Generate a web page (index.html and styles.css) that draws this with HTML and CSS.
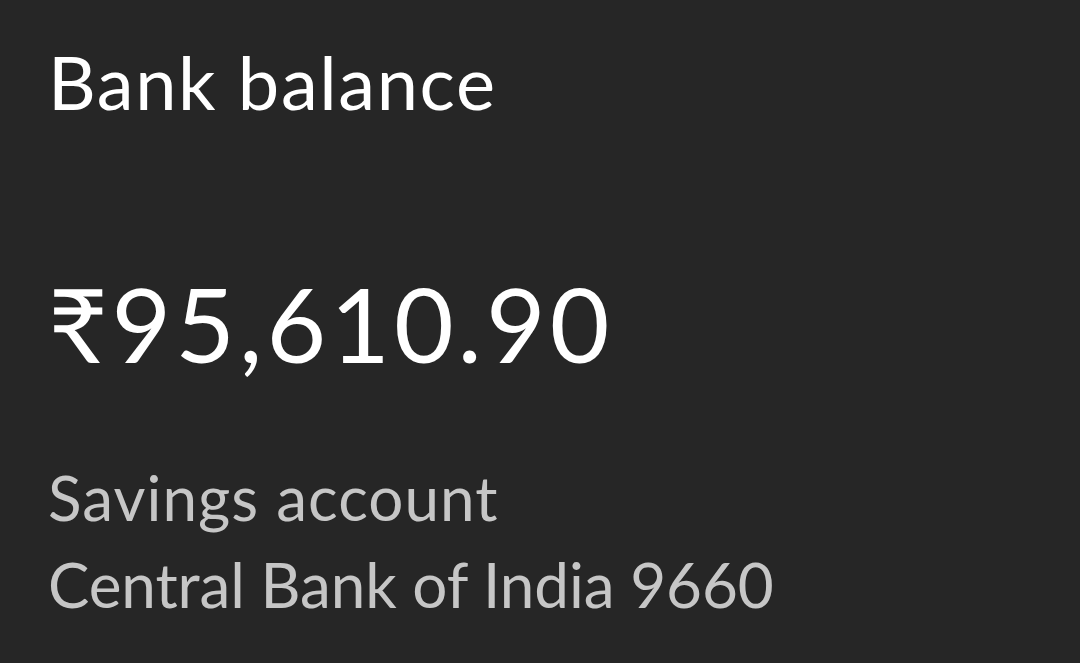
FILE: index.html
```html
<!DOCTYPE html>
<html><head><link rel="stylesheet" href="styles.css"></head>
<body>
<main class="card">
  <h1 class="title">Bank balance</h1>
  <div class="amount">₹95,610.90</div>
  <div class="details">
    <div class="line account-type">Savings account</div>
    <div class="line account-bank">Central Bank of India 9660</div>
  </div>
</main>
</body></html>
```
FILE: styles.css
```css
html,body{margin:0;background:#262626}
body{font-family:Lato,"Noto Sans",sans-serif;color:#fff}
.card{display:flex;flex-direction:column;padding:38px 0 0 48px}
.title{margin:0;font-weight:400;font-size:74px;line-height:1.2;letter-spacing:1.6px}
.amount{margin-top:135px;font-size:103px;line-height:1.2;letter-spacing:4px}
.details{margin-top:69px;display:flex;flex-direction:column;color:#c6c6c6}
.line{font-size:62px;line-height:87px;white-space:nowrap}
.account-type{letter-spacing:1.05px}
.account-bank{letter-spacing:-0.1px}
```
